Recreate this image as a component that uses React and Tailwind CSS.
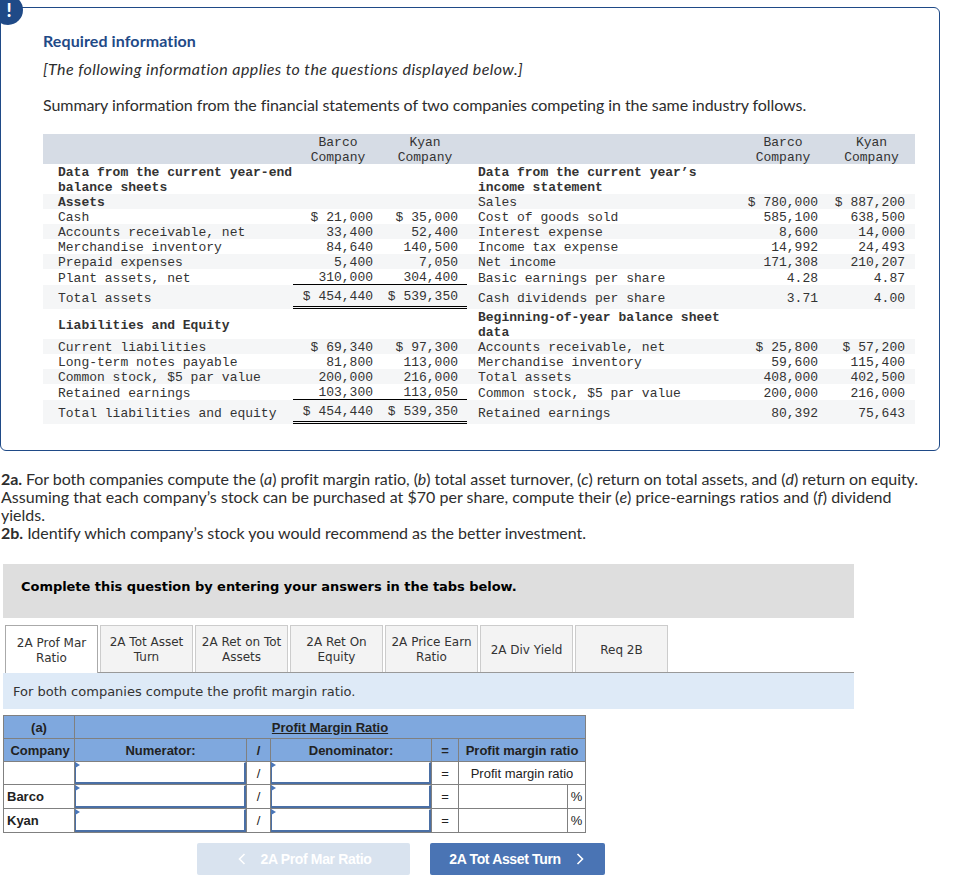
const sans = 'font-["Lato","Open_Sans",sans-serif]';

const rows = [
  { h: 'h-[30px]', label: 'Data from the current year-end balance sheets', bold: true, label2: "Data from the current year’s income statement", bold2: true },
  { h: 'h-[15px]', alt: true, label: 'Assets', bold: true, label2: 'Sales', b2: '$ 780,000', k2: '$ 887,200' },
  { h: 'h-[15px]', label: 'Cash', b: '$ 21,000', k: '$ 35,000', label2: 'Cost of goods sold', b2: '585,100', k2: '638,500' },
  { h: 'h-[15px]', alt: true, label: 'Accounts receivable, net', b: '33,400', k: '52,400', label2: 'Interest expense', b2: '8,600', k2: '14,000' },
  { h: 'h-[15px]', label: 'Merchandise inventory', b: '84,640', k: '140,500', label2: 'Income tax expense', b2: '14,992', k2: '24,493' },
  { h: 'h-[15px]', alt: true, label: 'Prepaid expenses', b: '5,400', k: '7,050', label2: 'Net income', b2: '171,308', k2: '210,207' },
  { h: 'h-[16px]', label: 'Plant assets, net', b: '310,000', k: '304,400', under: true, label2: 'Basic earnings per share', b2: '4.28', k2: '4.87' },
  { h: 'h-[24px]', alt: true, label: 'Total assets', b: '$ 454,440', k: '$ 539,350', total: true, label2: 'Cash dividends per share', b2: '3.71', k2: '4.00' },
  { h: 'h-[30px]', label: 'Liabilities and Equity', bold: true, label2: 'Beginning-of-year balance sheet data', bold2: true },
  { h: 'h-[15px]', alt: true, label: 'Current liabilities', b: '$ 69,340', k: '$ 97,300', label2: 'Accounts receivable, net', b2: '$ 25,800', k2: '$ 57,200' },
  { h: 'h-[15px]', label: 'Long-term notes payable', b: '81,800', k: '113,000', label2: 'Merchandise inventory', b2: '59,600', k2: '115,400' },
  { h: 'h-[15px]', alt: true, label: 'Common stock, $5 par value', b: '200,000', k: '216,000', label2: 'Total assets', b2: '408,000', k2: '402,500' },
  { h: 'h-[16px]', label: 'Retained earnings', b: '103,300', k: '113,050', under: true, label2: 'Common stock, $5 par value', b2: '200,000', k2: '216,000' },
  { h: 'h-[24px]', alt: true, label: 'Total liabilities and equity', b: '$ 454,440', k: '$ 539,350', total: true, label2: 'Retained earnings', b2: '80,392', k2: '75,643' },
];

const tabs = [
  '2A Prof Mar Ratio',
  '2A Tot Asset Turn',
  '2A Ret on Tot Assets',
  '2A Ret On Equity',
  '2A Price Earn Ratio',
  '2A Div Yield',
  'Req 2B',
];

const NumCell = ({ value, pad, under, total }) => (
  <div
    className={`flex justify-end ${pad} ${under ? 'items-start border-b border-black' : ''} ${
      total ? 'items-start border-b-[3px] border-double border-black pt-[3px]' : ''
    } ${!under && !total ? 'items-center' : ''}`}
  >
    <span className="translate-y-px">{value}</span>
  </div>
);

const FinancialRow = ({ row }) => (
  <div
    className={`grid grid-cols-[250px_90px_84px_271px_89px_88px] ${row.h} ${row.alt ? 'bg-[#f5f6f7]' : ''}`}
  >
    <div className={`flex items-center pl-[15px] ${row.bold ? 'font-bold' : ''}`}>
      <span className="translate-y-px">{row.label}</span>
    </div>
    <NumCell value={row.b} pad="pr-[10px]" under={row.under} total={row.total} />
    <NumCell value={row.k} pad="pr-[9px]" under={row.under} total={row.total} />
    <div className={`flex items-center pl-[11px] ${row.bold2 ? 'font-bold' : ''}`}>
      <span className="translate-y-px">{row.label2}</span>
    </div>
    <NumCell value={row.b2} pad="pr-[9px]" />
    <NumCell value={row.k2} pad="pr-[10px]" />
  </div>
);

const HeadCell = ({ className = '', children }) => (
  <div className={`translate-y-px text-center ${className}`}>{children}</div>
);

const InputCell = () => (
  <div className="relative h-full border-2 border-t-[1px] border-l-[1px] border-[#4a6fa5] border-t-white bg-white">
    <span className="absolute -left-px -top-px h-0 w-0 border-y-[3px] border-l-[5px] border-y-transparent border-l-[#4a76b8]" />
  </div>
);

const Cell = ({ className = '', children }) => (
  <div className={`flex items-center justify-center border-r border-b border-[#808080] ${className}`}>
    {children}
  </div>
);

export default function App() {
  return (
    <div className="relative h-[878px] w-[966px] overflow-hidden bg-white pt-[7px] text-[#2d2d2d]">
      <span className={`absolute -left-[7px] -top-[5px] flex h-[30px] w-[30px] items-center justify-center rounded-full bg-[#1f4a87] text-[18px] font-black text-white ${sans}`}>
        <span className="ml-[2px]">!</span>
      </span>

      {/* Required information card */}
      <div className={`w-[940px] rounded-[6px] border border-[#1f4a87] pb-[26px] pl-[42px] pt-[21px] text-[16px] leading-[24px] ${sans}`}>
        <h2 className="mb-1 font-bold tracking-[0.1px] text-[#1f4a87]">Required information</h2>
        <p className="mb-1 italic tracking-[0.41px]">[The following information applies to the questions displayed below.]</p>
        <p className="mb-3 mt-3 tracking-[-0.07px]">Summary information from the financial statements of two companies competing in the same industry follows.</p>
        <div className="mt-[17px] w-[872px] font-['Liberation_Mono',monospace] text-[13px] leading-[15px] text-[#333]">
          <div className="grid h-[30px] grid-cols-[250px_90px_84px_271px_89px_88px] bg-[#d6dce5]">
            <div />
            <HeadCell>Barco<br />Company</HeadCell>
            <HeadCell>Kyan<br />Company</HeadCell>
            <div />
            <HeadCell className="pl-[1px]">Barco<br />Company</HeadCell>
            <HeadCell className="pl-[1px]">Kyan<br />Company</HeadCell>
          </div>
          {rows.map((row, index) => (
            <FinancialRow key={index} row={row} />
          ))}
        </div>
      </div>

      {/* Question text */}
      <div className={`ml-[1px] mt-[19px] whitespace-nowrap text-[16px] leading-[18px] ${sans}`}>
        <p>
          <span className="tracking-[-0.06px]">
            <b>2a.</b> For both companies compute the (<i>a</i>) profit margin ratio, (<i>b</i>) total asset turnover, (<i>c</i>) return on total assets, and (<i>d</i>) return on equity.
          </span>
          <br />
          <span className="tracking-[0.03px]">
            Assuming that each company’s stock can be purchased at $70 per share, compute their (<i>e</i>) price-earnings ratios and (<i>f</i>) dividend
          </span>
          <br />
          yields.
        </p>
        <p className="tracking-[-0.03px]">
          <b>2b.</b> Identify which company’s stock you would recommend as the better investment.
        </p>
      </div>

      <div className="ml-[3px] mt-[22px] h-[54px] w-[851px] bg-[#dedede] pl-[18px] pt-[14px] font-['DejaVu_Sans',sans-serif] text-[13px] font-bold leading-[18px] tracking-[-0.04px] text-black">
        Complete this question by entering your answers in the tabs below.
      </div>

      {/* Tabs */}
      <div className="ml-[5px] mt-[7px] flex h-[48px] w-[849px] gap-[2px] border-b border-[#999] font-['DejaVu_Sans',sans-serif] text-[12px] leading-[15px] text-[#333]">
        {tabs.map((tab, index) => (
          <div
            key={tab}
            className={`flex w-[93px] items-center justify-center border px-[3px] pt-[2px] text-center ${
              index === 0
                ? 'relative h-[48px] border-[#aaa] border-b-0 bg-white'
                : 'h-[47px] border-[#ccc] border-b-0 bg-[#f3f3f3]'
            }`}
          >
            {tab}
          </div>
        ))}
      </div>

      <div className="ml-[3px] flex h-[36px] w-[851px] items-center bg-[#deeaf7] pl-[10px] pt-[2px] font-['DejaVu_Sans',sans-serif] text-[13px] text-[#333]">
        For both companies compute the profit margin ratio.
      </div>

      {/* Answer table */}
      <div className="ml-[3px] mt-[6px] grid w-[583px] grid-cols-[71px_172px_24px_161px_27px_109px_18px] grid-rows-[23px_23px_23px_24px_24px] border-l border-t border-[#808080] font-['Liberation_Sans',sans-serif] text-[13px] leading-none text-[#222]">
        <Cell className="bg-[#7fa8de] font-bold">(a)</Cell>
        <Cell className="col-span-6 bg-[#7fa8de] font-bold underline">Profit Margin Ratio</Cell>

        <Cell className="bg-[#7fa8de] pl-[2px] font-bold">Company</Cell>
        <Cell className="bg-[#7fa8de] font-bold">Numerator:</Cell>
        <Cell className="bg-[#7fa8de] font-bold">/</Cell>
        <Cell className="bg-[#7fa8de] font-bold">Denominator:</Cell>
        <Cell className="bg-[#7fa8de] font-bold">=</Cell>
        <Cell className="col-span-2 bg-[#7fa8de] font-bold">Profit margin ratio</Cell>

        <Cell />
        <Cell className="!block"><InputCell /></Cell>
        <Cell>/</Cell>
        <Cell className="!block"><InputCell /></Cell>
        <Cell>=</Cell>
        <Cell className="col-span-2">Profit margin ratio</Cell>

        {['Barco', 'Kyan'].map((name) => [
          <Cell key={`${name}-n`} className="!justify-start pl-[3px] font-bold">{name}</Cell>,
          <Cell key={`${name}-a`} className="!block"><InputCell /></Cell>,
          <Cell key={`${name}-d`}>/</Cell>,
          <Cell key={`${name}-b`} className="!block"><InputCell /></Cell>,
          <Cell key={`${name}-e`}>=</Cell>,
          <Cell key={`${name}-r`} />,
          <Cell key={`${name}-p`}>%</Cell>,
        ])}
      </div>

      {/* Prev / next */}
      <div className="ml-[197px] mt-[10px] flex gap-[20px] font-['Liberation_Sans',sans-serif] text-[14px] font-bold tracking-[-0.35px] text-white">
        <button className="flex h-[32px] w-[213px] items-center justify-center gap-[15px] rounded-[2px] bg-[#d9e3ef] pl-[2px]">
          <svg width="8" height="12" viewBox="0 0 8 12" fill="none" stroke="white" strokeWidth="1.6">
            <path d="M6.5 1 1.5 6l5 5" />
          </svg>
          2A Prof Mar Ratio
        </button>
        <button className="flex h-[32px] w-[175px] items-center justify-center gap-[15px] rounded-[2px] bg-[#4a74b4] pr-[2px]">
          2A Tot Asset Turn
          <svg width="8" height="12" viewBox="0 0 8 12" fill="none" stroke="white" strokeWidth="1.6">
            <path d="M1.5 1l5 5-5 5" />
          </svg>
        </button>
      </div>
    </div>
  );
}
